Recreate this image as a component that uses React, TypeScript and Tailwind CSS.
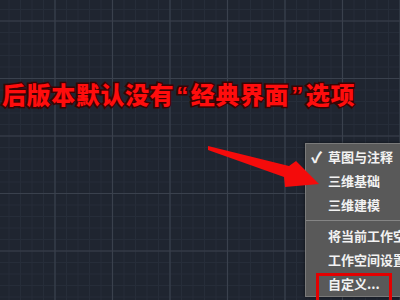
const MENU_TOP = ["草图与注释", "三维基础", "三维建模"];
const MENU_BOTTOM = ["将当前工作空间另存为...", "工作空间设置...", "自定义..."];

function GridCanvas() {
  const minor: number[] = [];
  for (let v = 55 - 57.5; v < 420; v += 11.5) minor.push(v);
  const major: number[] = [];
  for (let v = 55 - 57.5; v < 420; v += 57.5) major.push(v);
  const minorY: number[] = [];
  for (let v = 21 - 57.5; v < 320; v += 11.5) minorY.push(v);
  const majorY: number[] = [];
  for (let v = 21 - 57.5; v < 320; v += 57.5) majorY.push(v);

  return (
    <svg className="absolute inset-0" width={400} height={300}>
      <rect width={400} height={300} fill="#1f2530" />
      {minor.map((x) => (
        <line key={"mx" + x} x1={x} x2={x} y1={0} y2={300} stroke="#262d39" strokeWidth={1} />
      ))}
      {minorY.map((y) => (
        <line key={"my" + y} y1={y} y2={y} x1={0} x2={400} stroke="#262d39" strokeWidth={1} />
      ))}
      {major.map((x) => (
        <line key={"Mx" + x} x1={x} x2={x} y1={0} y2={300} stroke="#3a414d" strokeWidth={1.2} />
      ))}
      {majorY.map((y) => (
        <line key={"My" + y} y1={y} y2={y} x1={0} x2={400} stroke="#3a414d" strokeWidth={1.2} />
      ))}
    </svg>
  );
}

function Arrow() {
  return (
    <svg className="pointer-events-none absolute inset-0 z-20" width={400} height={300}>
      <polygon
        points="208,146 289,166 296,161 319,184 285,187 284,177 208,150"
        fill="#f40b0b"
      />
    </svg>
  );
}

function Quote({ ch }: { ch: string }) {
  return <span className="px-[2px] font-['Liberation_Sans',sans-serif] font-bold">{ch}</span>;
}

export default function App() {
  return (
    <div
      className="relative h-[300px] w-[400px] overflow-hidden bg-[#1f2530]"
      style={{ fontFamily: '"Noto Sans CJK SC", "Noto Sans", sans-serif' }}
    >
      <GridCanvas />

      <div className="relative z-10 pl-[2px] pt-[78px]">
        <div className="whitespace-nowrap text-[24px] font-black leading-[32px] tracking-[0.6px] text-[#ff0d0d] [-webkit-text-stroke:3px_#3a0303] [paint-order:stroke_fill]">
          后版本默认没有<Quote ch="“" />经典界面<Quote ch="”" />选项
        </div>
      </div>

      <Arrow />

      {/* workspace dropdown */}
      <div className="absolute left-[305px] top-[143px] z-10 w-[120px] border border-[#7a7a7a] bg-[#595959] pt-px text-[13px] font-bold text-[#f2f2f2] shadow-[0_0_3px_rgba(0,0,0,0.6)]">
        {MENU_TOP.map((label, i) => (
          <div key={label} className="flex h-[24px] items-center whitespace-nowrap">
            <span className="w-[22px] pl-[5px] text-[15px] font-black">{i === 0 ? "✓" : ""}</span>
            <span>{label}</span>
          </div>
        ))}
        <div className="my-[3px] h-px bg-[#858585]" />
        {MENU_BOTTOM.map((label) => (
          <div key={label} className="flex h-[24px] items-center whitespace-nowrap pl-[22px]">
            {label}
          </div>
        ))}
      </div>

      <div className="absolute left-[316px] top-[273px] z-10 h-[40px] w-[76px] border-[3px] border-[#e30000]" />
    </div>
  );
}
